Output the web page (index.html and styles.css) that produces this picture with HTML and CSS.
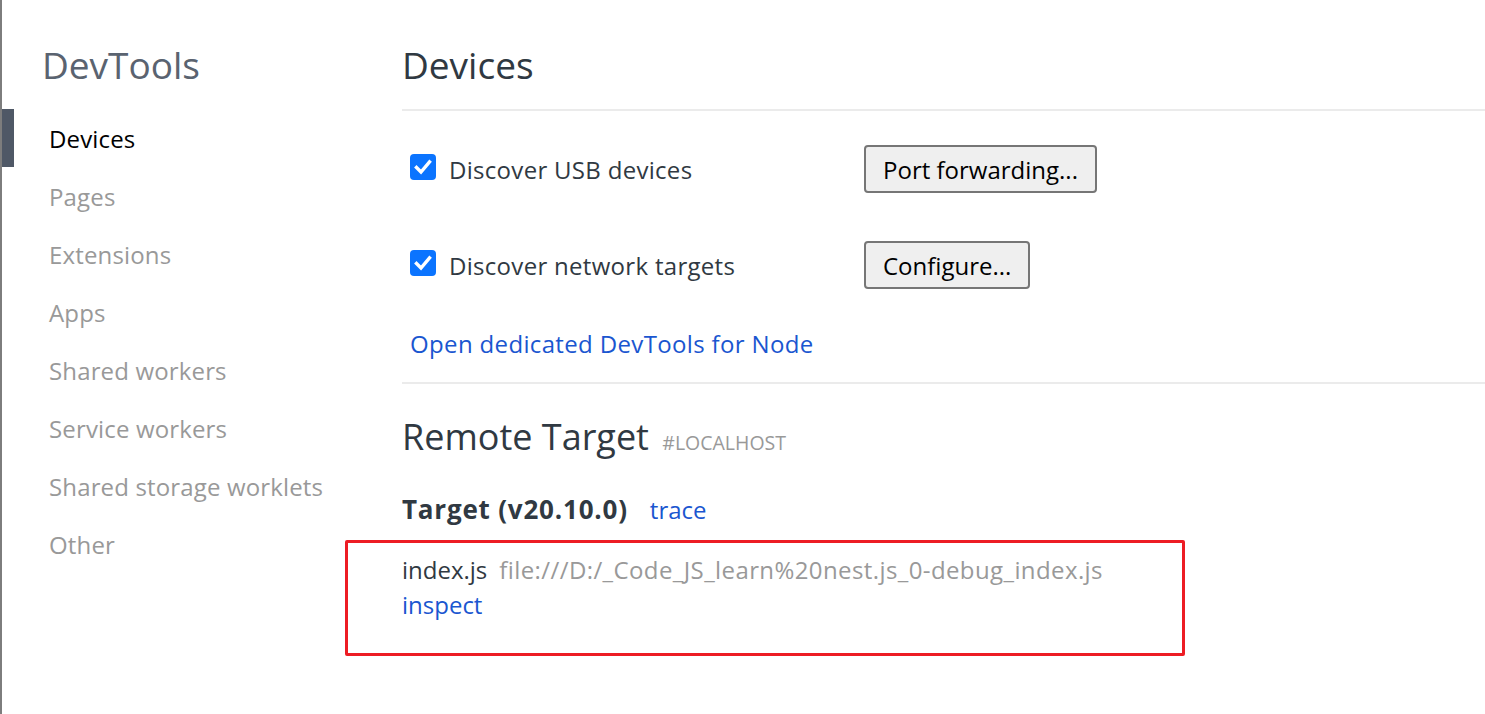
FILE: index.html
```html
<!DOCTYPE html>
<html lang="en">
<head>
<meta charset="utf-8">
<title>Inspect with Chrome Developer Tools</title>
<link rel="stylesheet" href="styles.css">
</head>
<body>
<div class="page">
  <nav class="sidebar">
    <h1 class="sidebar-title">DevTools</h1>
    <ul class="nav-list">
      <li class="nav-item selected">Devices</li>
      <li class="nav-item">Pages</li>
      <li class="nav-item">Extensions</li>
      <li class="nav-item">Apps</li>
      <li class="nav-item">Shared workers</li>
      <li class="nav-item">Service workers</li>
      <li class="nav-item">Shared storage worklets</li>
      <li class="nav-item">Other</li>
    </ul>
  </nav>
  <main class="content">
    <header class="content-header">
      <h1 class="content-title">Devices</h1>
    </header>
    <section class="device-settings">
      <div class="setting-row">
        <label class="check-label">
          <span class="checkbox"><svg viewBox="0 0 26 26" width="26" height="26"><path d="M6.5 13.5 L11 18 L19.5 8" fill="none" stroke="#fff" stroke-width="3.4" stroke-linecap="square"/></svg></span>
          <span class="check-text">Discover USB devices</span>
        </label>
        <button class="btn">Port forwarding...</button>
      </div>
      <div class="setting-row">
        <label class="check-label">
          <span class="checkbox"><svg viewBox="0 0 26 26" width="26" height="26"><path d="M6.5 13.5 L11 18 L19.5 8" fill="none" stroke="#fff" stroke-width="3.4" stroke-linecap="square"/></svg></span>
          <span class="check-text">Discover network targets</span>
        </label>
        <button class="btn">Configure...</button>
      </div>
      <a class="link node-link" href="#">Open dedicated DevTools for Node</a>
    </section>
    <section class="remote">
      <h2 class="remote-title">Remote Target <span class="remote-host">#LOCALHOST</span></h2>
      <div class="browser-line">
        <span class="browser-name">Target (v20.10.0)</span>
        <a class="link trace" href="#">trace</a>
      </div>
      <div class="target-item">
        <div class="target-line">
          <span class="target-name">index.js</span>
          <span class="target-url">file:///D:/_Code_JS_learn%20nest.js_0-debug_index.js</span>
        </div>
        <div class="target-actions"><a class="link" href="#">inspect</a></div>
        <div class="annotation"></div>
      </div>
    </section>
  </main>
</div>
</body>
</html>
```
FILE: styles.css
```css
* { box-sizing: border-box; }
html, body { margin: 0; padding: 0; background: #fff; }
body {
  font-family: "Open Sans", "Noto Sans", "Liberation Sans", sans-serif;
  color: #303942;
  font-size: 24px;
}
.page {
  display: flex;
  min-height: 100vh;
  border-left: 2px solid #7d7d7d;
}
.sidebar {
  width: 400px;
  flex-shrink: 0;
}
.sidebar-title {
  margin: 0;
  height: 109px;
  padding: 46px 0 0 40px;
  font-size: 37px;
  line-height: 37px;
  font-weight: 400;
  color: #5a6370;
}
.nav-list {
  list-style: none;
  margin: 0;
  padding: 0;
}
.nav-item {
  height: 58px;
  line-height: 60px;
  padding-left: 47px;
  color: #999;
  font-size: 24px;
  letter-spacing: 0.15px;
}
.nav-item.selected {
  color: #000;
  border-left: 12px solid #4f5866;
  padding-left: 35px;
}
.content {
  flex: 1;
  min-width: 0;
}
.content-header {
  height: 111px;
  border-bottom: 2px solid #ebebeb;
  padding-top: 46px;
}
.content-title {
  margin: 0;
  font-size: 37px;
  line-height: 37px;
  font-weight: 400;
  color: #303942;
}
.device-settings {
  padding: 34px 0 21px 8px;
  border-bottom: 2px solid #ebebeb;
}
.setting-row {
  display: flex;
  align-items: center;
  height: 48px;
  margin-bottom: 48px;
}
.setting-row:nth-child(2) { margin-bottom: 38px; }
.check-label {
  display: flex;
  align-items: center;
  gap: 13px;
  width: 454px;
}
.checkbox {
  width: 26px;
  height: 26px;
  border-radius: 4px;
  background: #0b74ff;
  display: flex;
  margin-top: -4px;
}
.check-text {
  line-height: 34px;
  letter-spacing: 0.3px;
  padding-top: 2px;
}
.btn {
  font: inherit;
  font-size: 24px;
  color: #000;
  height: 48px;
  padding: 0 17px;
  background: #efefef;
  border: 2px solid #767676;
  border-radius: 4px;
}
.link {
  color: #1a56d0;
  text-decoration: none;
}
.node-link {
  display: block;
  line-height: 34px;
  letter-spacing: 0.35px;
}
.remote-title {
  margin: 31px 0 0;
  font-size: 36px;
  line-height: 44px;
  font-weight: 400;
  color: #303942;
}
.remote-host {
  font-size: 19.5px;
  color: #999;
  margin-left: 4px;
}
.browser-line {
  margin-top: 27px;
  line-height: 34px;
  display: flex;
  align-items: baseline;
  gap: 22px;
}
.browser-name {
  font-weight: 700;
  font-size: 26px;
  letter-spacing: 0.8px;
}
.target-item {
  position: relative;
  margin-top: 25px;
}
.target-line {
  line-height: 35px;
  display: flex;
  gap: 12px;
}
.target-name { color: #303942; }
.target-url {
  color: #999;
  letter-spacing: 0.4px;
}
.target-actions { line-height: 35px; }
.annotation {
  position: absolute;
  left: -57px;
  top: -12px;
  width: 840px;
  height: 116px;
  border: 3px solid #ed1c24;
  border-radius: 2px;
  pointer-events: none;
}
```
